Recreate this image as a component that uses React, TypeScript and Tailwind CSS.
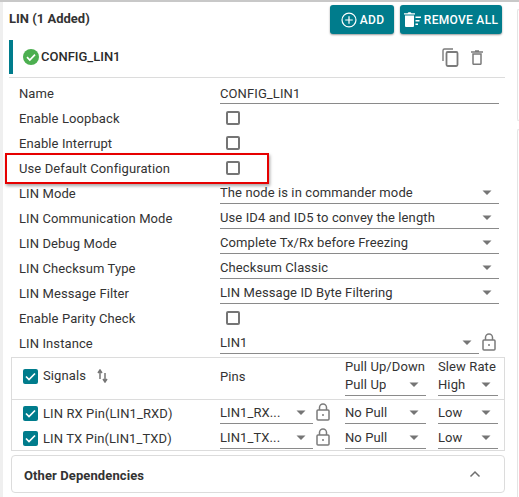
import React from "react";

function Caret() {
  return (
    <svg width="10" height="6" viewBox="0 0 10 6" className="shrink-0">
      <path d="M0.500 0.500h9L5 5z" fill="#757575" />
    </svg>
  );
}

function Lock({ className = "" }: { className?: string }) {
  return (
    <svg width="14" height="18" viewBox="0 0 14 18" fill="none" stroke="#7b7b7b" strokeWidth="1.5" className={`shrink-0 ${className}`}>
      <rect x="1" y="7" width="12" height="10" rx="1" />
      <path d="M3.500 7V4.500a3.500 3.500 0 0 1 7 0V7" />
      <circle cx="7" cy="12" r="1" fill="#7b7b7b" stroke="none" />
    </svg>
  );
}

function Check({ on }: { on?: boolean }) {
  if (on) {
    return (
      <span className="w-[15px] h-[15px] rounded-[2px] bg-[#007c8c] flex items-center justify-center shrink-0">
        <svg width="13" height="13" viewBox="0 0 13 13" fill="none" stroke="#fff" strokeWidth="1.7">
          <path d="M2 6.500l3 3 6-6" />
        </svg>
      </span>
    );
  }
  return <span className="block w-[14px] h-[14px] rounded-[2px] border-2 border-[#757575] shrink-0" />;
}

function Select({ text, className = "" }: { text: string; className?: string }) {
  return (
    <div className={`flex items-center justify-between h-[20px] border-b border-[#8a8a8a] shrink-0 pr-[7px] ${className}`}>
      <span className="truncate">{text}</span>
      <Caret />
    </div>
  );
}

function Row({ label, children }: { label: string; children: React.ReactNode }) {
  return (
    <div className="flex items-center h-[25px] pl-[10px] pr-[6px]">
      <span className="w-[201px] shrink-0">{label}</span>
      <div className="flex-1 min-w-0">{children}</div>
    </div>
  );
}

function CheckCell() {
  return (
    <div className="pl-[6px] -mt-[1px]">
      <Check />
    </div>
  );
}

function TrashLines() {
  return (
    <svg width="17" height="15" viewBox="0 0 17 15" fill="#fff" className="shrink-0">
      <path d="M1 3.500h9V14a1 1 0 0 1-1 1H2a1 1 0 0 1-1-1zM0 1.200h3.500L4.500.2h2l1 1H11v1.200H0z" />
      <path d="M11.500 4.500h5.500v1.400h-5.500zM11.500 8h4v1.400h-4zM11.500 11.500h2.500v1.400h-2.500z" />
    </svg>
  );
}

function SignalRow({ label, pin }: { label: string; pin: string }) {
  return (
    <div className="flex items-center h-[25px]">
      <div className="w-[208px] flex items-center gap-[5px] pl-[11px] shrink-0">
        <Check on />
        <span>{label}</span>
      </div>
      <Select text={pin} className="w-[93px]" />
      <span className="ml-[3px] w-[29px] shrink-0 flex">
        <Lock className="-mt-[4px]" />
      </span>
      <Select text="No Pull" className="w-[81px]" />
      <Select text="Low" className="w-[60px] ml-[12px]" />
    </div>
  );
}

export default function App() {
  return (
    <div className="relative w-[519px] h-[497px] overflow-hidden bg-white text-[13px] text-[#333] font-['Roboto',sans-serif] tracking-[0.1px]">
      <div className="h-[2px] bg-[#c8c8c8]" />
      <div className="flex h-[495px]">
        <div className="w-[3px] bg-[#efefef] shrink-0" />
        <div className="w-[503px] pl-[6px] pr-[1px] shrink-0">
          <div className="flex items-center justify-between h-[29px] mt-[3px] mb-[6px] pr-[3px]">
            <span className="font-bold text-[#333] tracking-normal -mt-[2px]">LIN (1 Added)</span>
            <div className="flex gap-[6px]">
              <button className="w-[64px] h-[29px] rounded-[3px] bg-[#007c8c] shadow-[0_1px_2px_rgba(0,0,0,0.4)] flex items-center justify-center gap-[3px] pl-[1px] text-white text-[12px] font-medium tracking-[0.3px]">
                <svg width="16" height="16" viewBox="0 0 17 17" fill="none" stroke="#fff" strokeWidth="1.3">
                  <circle cx="8.500" cy="8.500" r="7.400" />
                  <path d="M8.500 4.500v8M4.500 8.500h8" />
                </svg>
                ADD
              </button>
              <button className="w-[102px] h-[29px] rounded-[3px] bg-[#007c8c] shadow-[0_1px_2px_rgba(0,0,0,0.4)] flex items-center justify-center gap-[3px] text-white text-[12px] font-medium tracking-[0.3px]">
                <TrashLines />
                REMOVE ALL
              </button>
            </div>
          </div>
          <div className="flex items-center h-[34px] border-l-[4px] border-[#007c8c] pl-[10px] pr-[22px]">
            <svg width="16" height="16" viewBox="0 0 16 16" className="shrink-0">
              <circle cx="8" cy="8" r="8" fill="#4caf50" />
              <path d="M4 8.200l2.800 2.800 5.200-5.400" fill="none" stroke="#fff" strokeWidth="1.700" />
            </svg>
            <span className="ml-[2px] font-medium text-[#2b2b2b] tracking-normal">CONFIG_LIN1</span>
            <div className="ml-auto flex items-center gap-[12px]">
              <svg width="17" height="19" viewBox="0 0 17 19" fill="none" stroke="#7b7b7b" strokeWidth="1.400">
                <path d="M1 13V2.500A1.500 1.500 0 0 1 2.500 1H11" />
                <rect x="4.500" y="4" width="11" height="14" rx="1.200" strokeWidth="1.800" />
              </svg>
              <svg width="12" height="15" viewBox="0 0 12 15" fill="none" stroke="#7b7b7b" strokeWidth="1.500">
                <path d="M2 4v9.500a.8.8 0 0 0 .8.8h6.400a.8.8 0 0 0 .8-.8V4zM0 2h12M4 1h4" />
              </svg>
            </div>
          </div>
          <div className="h-px bg-[#dcdcdc] mt-[3px] mb-[3px]" />
          <Row label="Name">
            <div className="h-[20px] border-b border-[#8a8a8a]">CONFIG_LIN1</div>
          </Row>
          <Row label="Enable Loopback"><CheckCell /></Row>
          <Row label="Enable Interrupt"><CheckCell /></Row>
          <Row label="Use Default Configuration"><CheckCell /></Row>
          <Row label="LIN Mode"><Select text="The node is in commander mode" /></Row>
          <Row label="LIN Communication Mode"><Select text="Use ID4 and ID5 to convey the length" /></Row>
          <Row label="LIN Debug Mode"><Select text="Complete Tx/Rx before Freezing" /></Row>
          <Row label="LIN Checksum Type"><Select text="Checksum Classic" /></Row>
          <Row label="LIN Message Filter"><Select text="LIN Message ID Byte Filtering" /></Row>
          <Row label="Enable Parity Check"><CheckCell /></Row>
          <div className="flex items-center h-[25px] pl-[10px]">
            <span className="w-[201px] shrink-0">LIN Instance</span>
            <Select text="LIN1" className="w-[259px]" />
            <Lock className="ml-[3px] -mt-[4px]" />
          </div>
          <div className="ml-[2px] mt-[1px] border border-[#dcdcdc] h-[94px]">
            <div className="flex items-center h-[42px] border-b border-[#dcdcdc]">
              <div className="w-[208px] flex items-center gap-[5px] pl-[11px] shrink-0 -mt-[5px]">
                <Check on />
                <span>Signals</span>
                <svg width="11" height="14" viewBox="0 0 11 14" fill="none" stroke="#757575" strokeWidth="1.500" className="ml-[6px]">
                  <path d="M3 10V2M1 4l2-3 2 3M8 4v8.500M6 10l2 3 2-3" />
                </svg>
              </div>
              <span className="w-[125px] shrink-0 -mt-[3px]">Pins</span>
              <div className="w-[81px] shrink-0 whitespace-nowrap -mt-[4px]">
                <div className="h-[18px] leading-[18px]">Pull Up/Down</div>
                <Select text="Pull Up" className="h-[17px] w-[81px]" />
              </div>
              <div className="w-[60px] ml-[12px] shrink-0 whitespace-nowrap -mt-[4px]">
                <div className="h-[18px] leading-[18px]">Slew Rate</div>
                <Select text="High" className="h-[17px] w-[60px]" />
              </div>
            </div>
            <div className="pt-[1px]">
              <SignalRow label="LIN RX Pin(LIN1_RXD)" pin="LIN1_RX..." />
              <SignalRow label="LIN TX Pin(LIN1_TXD)" pin="LIN1_TX..." />
            </div>
          </div>
          <div className="ml-[2px] mt-[4px] h-[38px] border border-[#dcdcdc] rounded-[4px] flex items-center justify-between pl-[12px] pr-[23px]">
            <span className="font-bold tracking-[0.1px] text-[#333] mt-[3px]">Other Dependencies</span>
            <svg width="12" height="8" viewBox="0 0 12 8" fill="none" stroke="#6f6f6f" strokeWidth="1.500">
              <path d="M1.500 6.500L6 2l4.500 4.500" />
            </svg>
          </div>
        </div>
        <div className="flex-1 pt-[7px]">
          <div className="h-[112px] border border-r-0 border-[#e4e4e4] rounded-l-[4px] ml-[11px]" />
          <div className="h-[380px] mt-[8px] border border-r-0 border-[#e4e4e4] rounded-l-[4px] ml-[11px]" />
        </div>
      </div>
      <div className="absolute left-[5px] top-[153px] w-[264px] h-[31px] border-[2px] border-[#e60000] shadow-[1px_2px_3px_rgba(0,0,0,0.35)]" />
    </div>
  );
}
